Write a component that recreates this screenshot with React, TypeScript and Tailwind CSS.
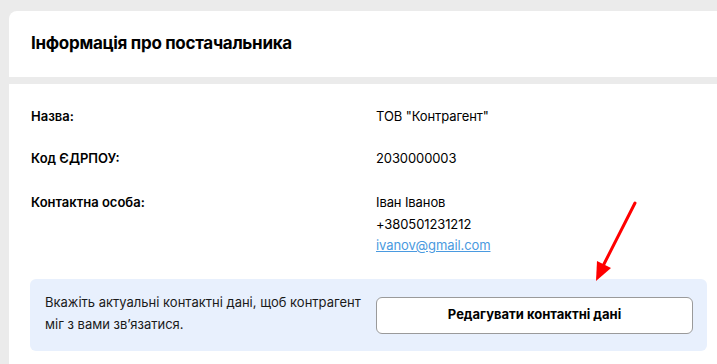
export default function App() {
  const rows = [
    { label: 'Назва:', value: ['ТОВ "Контрагент"'] },
    { label: 'Код ЄДРПОУ:', value: ['2030000003'] },
  ];

  return (
    <div className="relative min-h-[364px] bg-[#ebebeb] pl-[9px] pt-[11px] text-black font-['Inter',sans-serif]">
      {/* Заголовок */}
      <div className="flex h-[66px] items-center rounded-tl-lg bg-white pl-[22px]">
        <h2 className="text-[17px] font-bold tracking-[-0.3px]">Інформація про постачальника</h2>
      </div>

      {/* Деталі */}
      <div className="mt-[7px] bg-white pl-[21px] pr-[10px] pt-[22px] pb-[14px]">
        <div className="flex flex-col gap-[22px] pl-px text-[13px]">
          {rows.map((r) => (
            <div key={r.label} className="flex leading-5">
              <div className="w-[345px] font-semibold">{r.label}</div>
              <div className="tracking-[-0.1px]">{r.value[0]}</div>
            </div>
          ))}
          <div className="mt-[2px] flex leading-[21px]">
            <div className="w-[345px] font-semibold">Контактна особа:</div>
            <div className="flex flex-col gap-px tracking-[-0.1px]">
              <span>Іван Іванов</span>
              <span>+380501231212</span>
              <a href="#" className="-mt-px text-[#4a9ae0] underline">ivanov@gmail.com</a>
            </div>
          </div>
        </div>

        <div className="mt-[23px] flex h-[72px] items-center rounded-md bg-[#e8f0fd] pl-[15px] pr-[14px]">
          <p className="mb-1 w-[331px] text-[13px] leading-[22px] text-[#1a1a1a]">
            Вкажіть актуальні контактні дані, щоб контрагент міг з вами зв’язатися.
          </p>
          <button className="h-[37px] flex-1 rounded-md border border-[#9a9a9a] bg-white text-[13px] font-bold">
            Редагувати контактні дані
          </button>
        </div>
      </div>

      {/* Стрілка */}
      <svg className="pointer-events-none absolute left-0 top-0" width="717" height="364">
        <line x1="635" y1="203" x2="603" y2="266" stroke="#ff0000" strokeWidth="3" strokeLinecap="round" />
        <polygon points="596,281 597,261 611,268" fill="#ff0000" />
      </svg>
    </div>
  );
}
